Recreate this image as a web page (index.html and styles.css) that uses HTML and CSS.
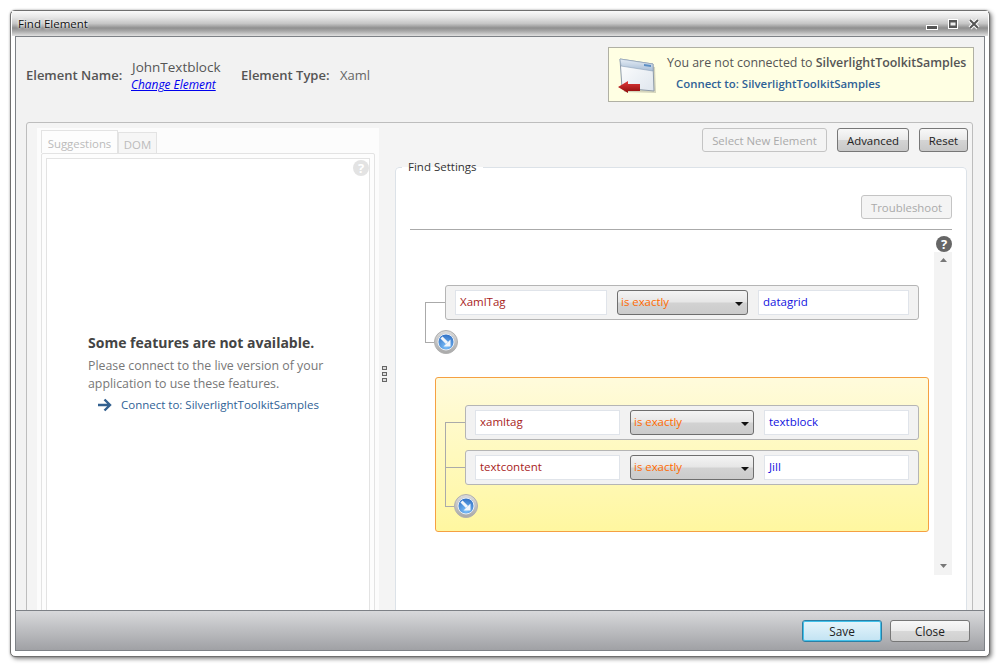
FILE: index.html
```html
<!DOCTYPE html>
<html lang="en">
<head>
<meta charset="utf-8">
<title>Find Element</title>
<link rel="stylesheet" href="styles.css">
</head>
<body>
<div class="window">
  <div class="titlebar">
    <span class="title">Find Element</span>
    <div class="controls">
      <svg class="ctl" width="12" height="12" viewBox="0 0 12 12"><rect x="0.5" y="7.5" width="11" height="4" fill="#555" stroke="#fff"/></svg>
      <svg class="ctl" width="12" height="12" viewBox="0 0 12 12"><rect x="1" y="1" width="10" height="10" fill="#fff"/><rect x="2" y="2" width="8" height="8" fill="#555"/><rect x="3.5" y="4.5" width="5" height="3" fill="#eee"/></svg>
      <svg class="ctl" width="12" height="12" viewBox="0 0 12 12"><path d="M2 2l8 8M10 2l-8 8" stroke="#fff" stroke-width="4"/><path d="M2 2l8 8M10 2l-8 8" stroke="#555" stroke-width="2"/></svg>
    </div>
  </div>
  <div class="frame">
    <div class="main">
      <header class="head">
        <strong class="lbl lbl-name">Element Name:</strong>
        <div class="name">
          <span class="name-val">JohnTextblock</span>
          <a class="change" href="#">Change Element</a>
        </div>
        <strong class="lbl lbl-type">Element Type:</strong>
        <span class="type-val">Xaml</span>
        <div class="notice">
          <svg class="notice-icon" width="50" height="40" viewBox="0 0 50 40">
            <defs>
              <linearGradient id="wbar" x1="0" y1="0" x2="0" y2="1"><stop offset="0" stop-color="#e6edf5"/><stop offset="1" stop-color="#a7bdd6"/></linearGradient>
              <linearGradient id="wbody" x1="0" y1="0" x2="1" y2="1"><stop offset="0" stop-color="#fff"/><stop offset="1" stop-color="#dfe6ee"/></linearGradient>
              <linearGradient id="arr" x1="0" y1="0" x2="0" y2="1"><stop offset="0" stop-color="#e23a3a"/><stop offset="1" stop-color="#8c0c0c"/></linearGradient>
            </defs>
            <path d="M6 7L38 11L39 37L7 36Z" fill="#b9b9a2" opacity=".6"/>
            <path d="M3 3L36 8L37 35L5 32Z" fill="url(#wbody)" stroke="#8f9caa"/>
            <path d="M3 3L36 8L36 15L4 10Z" fill="url(#wbar)" stroke="#8ba0b7" stroke-width=".6"/>
            <path d="M27 8l7 1v2l-7-1z" fill="#5b8fc4"/>
            <path d="M1 31L11 25V28H23V35H11V37Z" fill="url(#arr)"/>
          </svg>
          <div class="notice-text">
            <p class="notice-msg">You are not connected to <strong>SilverlightToolkitSamples</strong></p>
            <a class="notice-link" href="#">Connect to: SilverlightToolkitSamples</a>
          </div>
        </div>
      </header>
      <section class="panel">
        <aside class="left">
          <div class="tabs">
            <span class="tab active">Suggestions</span>
            <span class="tab tab-dom">DOM</span>
          </div>
          <div class="tabbody">
            <div class="inner">
              <span class="help faded">?</span>
              <div class="unavail">
                <h2>Some features are not available.</h2>
                <p>Please connect to the live version of your application to use these features.</p>
                <a class="unavail-link" href="#">
                  <svg width="15" height="14" viewBox="0 0 15 14"><path d="M1 7H12M7.5 1.5L13 7L7.5 12.5" fill="none" stroke="#32608f" stroke-width="2.4"/></svg>
                  <span>Connect to: SilverlightToolkitSamples</span>
                </a>
              </div>
            </div>
          </div>
        </aside>
        <div class="splitter"><i></i><i></i><i></i></div>
        <div class="right">
          <div class="toolbar">
            <button class="btn disabled btn-select">Select New Element</button>
            <button class="btn btn-adv">Advanced</button>
            <button class="btn btn-reset">Reset</button>
          </div>
          <fieldset class="settings">
            <legend>Find Settings</legend>
            <div class="ts-row"><button class="btn disabled btn-ts">Troubleshoot</button></div>
            <hr class="rule-line">
            <div class="help-row"><span class="help">?</span></div>
            <div class="canvas">
              <div class="rules">
                <div class="tree tree-top">
                  <div class="rule">
                    <span class="field key w152">XamlTag</span>
                    <span class="select w131">is exactly<svg width="8" height="4" viewBox="0 0 8 4"><path d="M0 0h8L4 4z" fill="#111"/></svg></span>
                    <span class="field val w151">datagrid</span>
                  </div>
                  <span class="add"><svg width="26" height="26" viewBox="0 0 26 26"><use href="#addicon"/></svg></span>
                </div>
                <div class="group">
                  <div class="tree tree-group">
                    <div class="rule">
                      <span class="field key w145">xamltag</span>
                      <span class="select w124">is exactly<svg width="8" height="4" viewBox="0 0 8 4"><path d="M0 0h8L4 4z" fill="#111"/></svg></span>
                      <span class="field val w145">textblock</span>
                    </div>
                    <div class="rule">
                      <span class="field key w145">textcontent</span>
                      <span class="select w124">is exactly<svg width="8" height="4" viewBox="0 0 8 4"><path d="M0 0h8L4 4z" fill="#111"/></svg></span>
                      <span class="field val w145">Jill</span>
                    </div>
                    <span class="add"><svg width="26" height="26" viewBox="0 0 26 26"><use href="#addicon"/></svg></span>
                  </div>
                </div>
              </div>
              <div class="scrollbar">
                <svg width="7" height="4" viewBox="0 0 7 4"><path d="M0 4h7L3.500 0z" fill="#777"/></svg>
                <svg width="7" height="4" viewBox="0 0 7 4"><path d="M0 0h7L3.500 4z" fill="#777"/></svg>
              </div>
            </div>
          </fieldset>
        </div>
      </section>
    </div>
    <footer class="footer">
      <button class="fbtn primary">Save</button>
      <button class="fbtn">Close</button>
    </footer>
  </div>
</div>
<svg class="defs" width="0" height="0">
  <defs>
    <radialGradient id="blue" cx=".5" cy=".8" r=".8"><stop offset="0" stop-color="#7cc0fa"/><stop offset="1" stop-color="#2f6fc4"/></radialGradient>
    <linearGradient id="ring" x1="0" y1="0" x2="0" y2="1"><stop offset="0" stop-color="#dcdcdc"/><stop offset="1" stop-color="#a8a8a8"/></linearGradient>
    <g id="addicon">
      <circle cx="13" cy="13" r="11.500" fill="url(#ring)" stroke="#b0b0b0"/>
      <circle cx="13" cy="13" r="8" fill="url(#blue)" stroke="#e8eef5"/>
      <path d="M8.500 8.500L14 14" stroke="#f2f6fb" stroke-width="3" fill="none"/>
      <path d="M17.500 10.500V17.500H10.500Z" fill="#f2f6fb"/>
    </g>
  </defs>
</svg>
</body>
</html>
```
FILE: styles.css
```css
* { box-sizing: border-box; }
html, body { margin: 0; height: 666px; overflow: hidden; background: #fff; }
body { font-family: "Open Sans", "Noto Sans", sans-serif; font-size: 11.4px; color: #444; }
a { text-decoration: none; }
p, h2 { margin: 0; }
.defs { display: block; height: 0; }

.window {
  width: 980px; height: 647px; margin: 10px 0 0 10px;
  display: flex; flex-direction: column;
  background: #fff; border: 1px solid #6f6f6f; border-radius: 5px;
  padding: 0 4px 5px 4px;
  box-shadow: 2px 2px 4px rgba(0,0,0,.45), 0 0 2px rgba(0,0,0,.3);
}
.titlebar {
  height: 25px; flex: none; margin: 0 -3px; padding: 0 8px 0 6px;
  display: flex; align-items: center; justify-content: space-between;
  background: linear-gradient(#fafafa 0, #e6e6e6 25%, #c6c6c6 50%, #8f8f8f 68%, #a8a8a8 80%, #e0e0e0 100%);
}
.title { color: #111; font-size: 11.5px; text-shadow: 0 0 3px #fff, 0 0 3px #fff; }
.controls { display: flex; gap: 9px; }
.ctl { display: block; }

.frame { flex: 1; min-height: 0; display: flex; flex-direction: column; border: 1px solid #7d8186; }
.main { flex: 1; min-height: 0; overflow: hidden; background: #f2f2f2; padding: 0 11px 0 10px; }

.head { height: 85px; display: flex; align-items: flex-start; }
.lbl { font-weight: 600; color: #555; font-size: 13px; margin-top: 29px; white-space: nowrap; }
.lbl-name { width: 106px; }
.lbl-type { margin-left: 20px; width: 99px; }
.name { width: 89px; padding-top: 21px; display: flex; flex-direction: column; }
.name-val { color: #555; font-size: 13.500px; line-height: 18px; white-space: nowrap; }
.change { color: #0000ee; font-style: italic; text-decoration: underline; font-size: 11.900px; line-height: 17px; white-space: nowrap; margin-left: -1px; }
.type-val { font-size: 13px; color: #666; margin-top: 29px; }
.notice {
  margin: 10px -1px 0 auto; width: 366px; height: 55px; flex: none;
  background: #ffffe3; border: 1px solid #b0b0a4;
  display: flex; padding: 6px 0 0 8px;
}
.notice-icon { flex: none; margin-top: 2px; }
.notice-msg { font-size: 12.400px; color: #555; line-height: 18px; white-space: nowrap; }
.notice-msg strong { font-weight: 600; }
.notice-link { display: block; margin: 3px 0 0 9px; color: #2f6296; font-weight: 600; font-size: 11.400px; line-height: 18px; white-space: nowrap; }

.panel {
  height: 540px; background: #f4f4f4; border: 1px solid #bdbdbd; border-radius: 3px 3px 0 0;
  display: flex; padding: 5px 4px 0 10px;
}
.left { width: 342px; flex: none; background: #fcfcfc; padding: 2px 4px 0 4px; }
.tabs { display: flex; align-items: flex-end; height: 23px; }
.tab { height: 21px; line-height: 23px; text-align: center; color: #bbb; background: #f6f6f6; border: 1px solid #e3e3e3; border-bottom: 0; }
.tab-dom { width: 39px; }
.tab.active { height: 23px; line-height: 26px; background: #fdfdfd; width: 77px; white-space: nowrap; }
.tabbody { height: 490px; border: 1px solid #e3e3e3; border-radius: 2px; padding: 4px; background: #fdfdfd; }
.inner { position: relative; height: 480px; background: #fff; border: 1px solid #e3e3e3; }
.help {
  width: 16px; height: 16px; border-radius: 50%; background: #666; color: #fff;
  font-weight: 700; font-size: 13px; line-height: 16px; text-align: center; display: block;
}
.help.faded { position: absolute; right: 0; top: 1px; background: #e3e3e3; }
.unavail { padding: 174px 0 0 41px; }
.unavail h2 { font-size: 14px; font-weight: 700; color: #444; line-height: 20px; }
.unavail p { font-size: 12.350px; color: #777; line-height: 18px; margin-top: 4px; width: 245px; }
.unavail-link { display: flex; align-items: center; gap: 9px; color: #2f6296; font-size: 11.500px; margin: 3px 0 0 9px; line-height: 18px; }

.splitter { width: 16px; flex: none; display: flex; flex-direction: column; gap: 2px; align-items: center; padding: 238px 6px 0 0; }
.splitter i { width: 5px; height: 4px; border: 1px solid #666; background: #ddd; display: block; }

.right { flex: 1; min-width: 0; }
.toolbar { display: flex; justify-content: flex-end; gap: 10px; height: 24px; }
.btn {
  font: inherit; height: 24px; padding: 0; color: #222; border: 1px solid #777; border-radius: 3px;
  background: linear-gradient(#f8f8f8, #e9e9e9 48%, #d4d4d4 52%, #c8c8c8);
}
.btn.disabled { color: #aaa; background: #f4f4f4; border-color: #c4c4c4; }
.btn-select { width: 125px; }
.btn-adv { width: 72px; }
.btn-reset { width: 49px; }
.btn-ts { width: 91px; }

.settings { margin: 8px 1px 0 0; padding: 0 14px; height: 520px; border: 1px solid #dce2e8; border-radius: 4px; background: #fff; min-width: 0; }
.settings legend { padding: 0 6px; margin-left: -8px; color: #333; font-size: 11.500px; line-height: 14px; }
.ts-row { display: flex; justify-content: flex-end; margin-top: 21px; }
.rule-line { border: 0; border-top: 1px solid #aaa; margin: 10px 0 0; }
.help-row { display: flex; justify-content: flex-end; margin-top: 6px; }
.canvas { display: flex; height: 323px; }
.rules { width: 524px; flex: none; padding: 33px 0 0 15px; }
.scrollbar { width: 18px; flex: none; background: #f3f3f3; display: flex; flex-direction: column; justify-content: space-between; align-items: center; padding: 6px 0 7px; }
.scrollbar svg { display: block; }

.tree { position: relative; padding-left: 20px; }
.tree::before { content: ""; position: absolute; left: 0; width: 1px; background: #aaa; }
.tree-top::before { top: 18px; height: 39px; }
.tree-group::before { top: 18px; height: 83px; }
.tree-top .rule { width: 474px; }
.rule {
  height: 35px; display: flex; align-items: center; gap: 10px; padding: 0 9px;
  background: #f2f2f2; border: 1px solid #b5b5b5; border-radius: 3px; position: relative;
}
.rule::before { content: ""; position: absolute; left: -21px; top: 16px; width: 20px; height: 1px; background: #aaa; }
.rule + .rule { margin-top: 10px; }
.field { height: 25px; line-height: 21px; padding: 0 4px; background: #fff; border: 1px solid #e0e4ea; font-size: 11.500px; white-space: nowrap; }
.key { color: #a81c1c; }
.val { color: #1212e0; }
.w152 { width: 152px; }
.w151 { width: 151px; }
.w145 { width: 145px; }
.select {
  height: 25px; padding: 0 4px 2px 3px; color: #ff6a00; border: 1px solid #6e6e6e; border-radius: 3px; font-size: 11.400px;
  background: linear-gradient(#f4f4f4, #e6e6e6 48%, #d2d2d2 52%, #cbcbcb);
  display: flex; align-items: center; justify-content: space-between;
}
.select svg { flex: none; margin-top: 4px; }
.w131 { width: 131px; }
.w124 { width: 124px; }
.add { display: block; width: 26px; height: 26px; margin: 9px 0 0 -12px; position: relative; }
.tree-group .add { margin-top: 8px; }
.add::before { content: ""; position: absolute; left: -8px; top: 13px; width: 9px; height: 1px; background: #aaa; }
.add svg { display: block; position: relative; }
.group {
  margin: 22px 0 0 10px; width: 494px; height: 155px; padding: 27px 9px 0 9px;
  border: 1px solid #f5a042; border-radius: 3px;
  background: linear-gradient(#fffbdc, #fff7a0);
}

.footer {
  height: 40px; flex: none; display: flex; justify-content: flex-end; align-items: flex-start; gap: 8px;
  padding: 9px 14px 0 0; border-top: 1px solid #7d8186;
  background: linear-gradient(#d8d9db, #a0a1a5);
}
.fbtn {
  font: inherit; font-size: 11.800px; width: 80px; height: 22px; padding: 0; color: #222; border: 1px solid #777; border-radius: 3px;
  background: linear-gradient(#f8f8f8, #ececec 48%, #d8d8d8 52%, #cfcfcf);
}
.fbtn.primary { border: 1px solid #2b7fa5; background: linear-gradient(#e6f5fb, #c2e3f3); box-shadow: inset 0 0 0 1px #42c1ea; }
```
